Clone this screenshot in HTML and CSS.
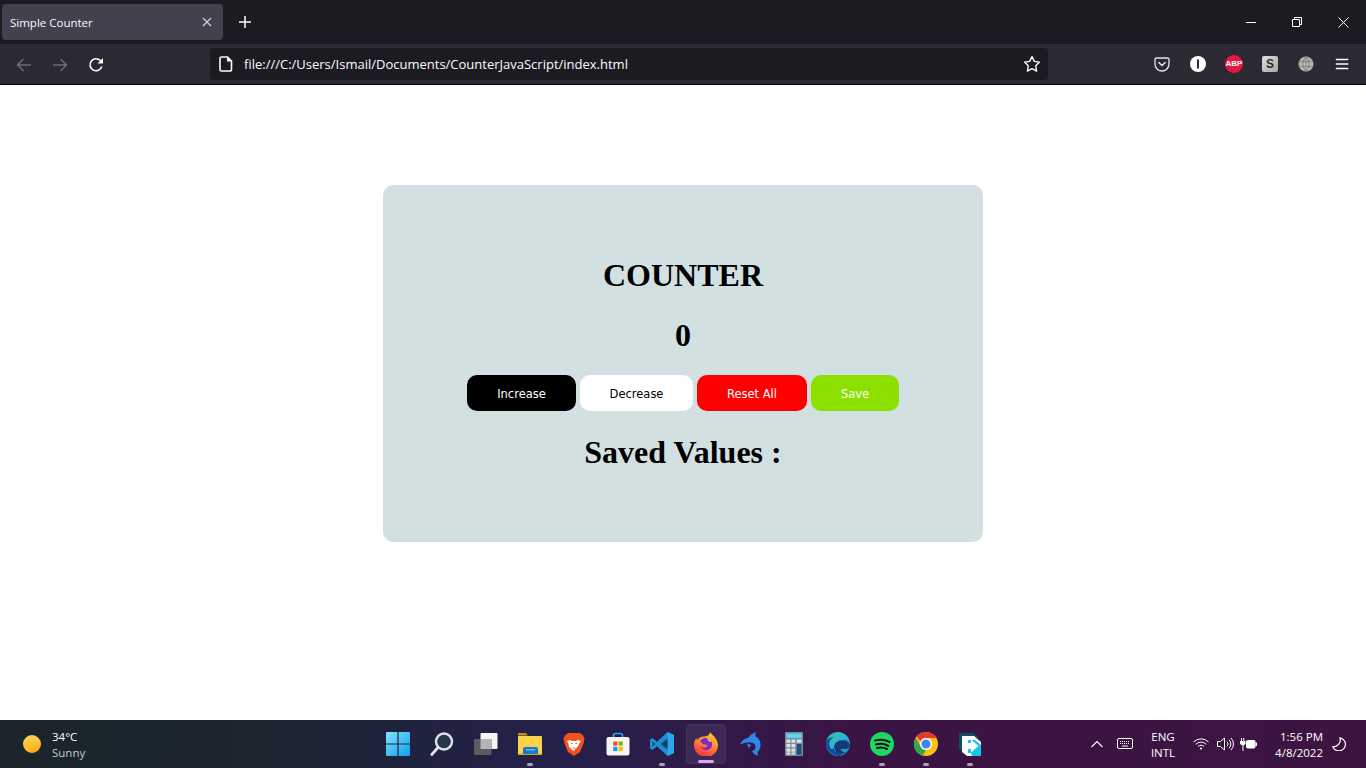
FILE: index.html
```html
<!DOCTYPE html>
<html lang="en">
<head>
<meta charset="utf-8">
<title>Simple Counter</title>
<link rel="stylesheet" href="styles.css">
</head>
<body>
<header class="browser">
  <div class="tabbar">
    <div class="tab">
      <span class="tab-title">Simple Counter</span>
      <svg class="tab-close" width="10" height="10" viewBox="0 0 10 10"><path d="M1 1l8 8M9 1l-8 8" stroke="#d5d5d8" stroke-width="1.1" fill="none"/></svg>
    </div>
    <div class="newtab"><svg width="14" height="14" viewBox="0 0 14 14"><path d="M7 1v12M1 7h12" stroke="#fbfbfe" stroke-width="1.5" fill="none"/></svg></div>
    <div class="winctl">
      <div class="winbtn"><svg width="10" height="10" viewBox="0 0 10 10"><path d="M0 5.5h10" stroke="#fff" fill="none"/></svg></div>
      <div class="winbtn"><svg width="10" height="10" viewBox="0 0 10 10"><path d="M.5 2.5h7v7h-7zM2.5 2.5v-2h7v7h-2" stroke="#fff" fill="none"/></svg></div>
      <div class="winbtn"><svg width="11" height="11" viewBox="0 0 11 11"><path d="M.5.5l10 10M10.500.5l-10 10" stroke="#fff" fill="none"/></svg></div>
    </div>
  </div>
  <div class="toolbar">
    <div class="nav">
      <div class="navbtn"><svg width="16" height="16" viewBox="0 0 16 16"><path d="M15 8H1.500M7.500 2L1.500 8l6 6" stroke="#6f6e75" stroke-width="1.400" fill="none"/></svg></div>
      <div class="navbtn"><svg width="16" height="16" viewBox="0 0 16 16"><path d="M1 8h13.500M8.500 2l6 6-6 6" stroke="#6f6e75" stroke-width="1.400" fill="none"/></svg></div>
      <div class="navbtn"><svg width="16" height="16" viewBox="0 0 16 16"><path d="M13.800 9.500A6 6 0 1 1 12.300 3.500L14.500 5.500" stroke="#fbfbfe" stroke-width="1.600" fill="none"/><path d="M15 1v5.500H9.500z" fill="#fbfbfe"/></svg></div>
    </div>
    <div class="urlbar">
      <svg class="url-file" width="14" height="16" viewBox="0 0 14 16"><path d="M2.500 1h6l4 4v8.500a1.500 1.500 0 0 1-1.500 1.500H2.500A1.500 1.500 0 0 1 1 13.500v-11A1.500 1.500 0 0 1 2.500 1z" fill="none" stroke="#fbfbfe" stroke-width="1.600"/><path d="M8 1v4.500h4.500z" fill="#fbfbfe"/></svg>
      <span class="url-text">file:///C:/Users/Ismail/Documents/CounterJavaScript/index.html</span>
      <svg class="url-star" width="18" height="18" viewBox="0 0 18 18"><path d="M9 1.500l2.300 4.900 5.200.7-3.800 3.700.9 5.400L9 13.700l-4.600 2.500.9-5.400L1.500 7.100l5.200-.7z" fill="none" stroke="#fbfbfe" stroke-width="1.400" stroke-linejoin="round"/></svg>
    </div>
    <div class="extensions">
      <div class="ext"><svg width="16" height="16" viewBox="0 0 16 16"><path d="M2.500 2h11A1.500 1.500 0 0 1 15 3.500V8a7 7 0 0 1-14 0V3.500A1.500 1.500 0 0 1 2.500 2z" fill="none" stroke="#e8e8ea" stroke-width="1.300"/><path d="M4.800 6.500L8 9.500l3.200-3" fill="none" stroke="#e8e8ea" stroke-width="1.500" stroke-linecap="round"/></svg></div>
      <div class="ext"><svg width="16" height="16" viewBox="0 0 16 16"><circle cx="8" cy="8" r="8" fill="#fff"/><rect x="7" y="3.500" width="2" height="9" fill="#2b2a33"/></svg></div>
      <div class="ext"><span class="abp">ABP</span></div>
      <div class="ext"><span class="sbadge">S</span></div>
      <div class="ext"><svg width="16" height="16" viewBox="0 0 16 16"><circle cx="8" cy="8" r="7.500" fill="#b4b4b4"/><path d="M.5 5.500h15M.5 10.500h15M8 .5v15M8 .5C4 4 4 12 8 15.500M8 .5c4 3.500 4 11.500 0 15" fill="none" stroke="#7c7c7e" stroke-width=".8"/></svg></div>
      <div class="ext"><svg width="14" height="12" viewBox="0 0 14 12"><path d="M1 1.500h12.500M1 6h12.500M1 10.500h12.500" stroke="#fbfbfe" stroke-width="1.400" fill="none" transform="translate(-.2 0)"/></svg></div>
    </div>
  </div>
</header>

<main class="page">
  <section class="card">
    <h1 class="title">COUNTER</h1>
    <h1 class="count">0</h1>
    <div class="buttons">
      <button class="btn btn-inc">Increase</button>
      <button class="btn btn-dec">Decrease</button>
      <button class="btn btn-reset">Reset All</button>
      <button class="btn btn-save">Save</button>
    </div>
    <h1 class="saved">Saved Values :</h1>
  </section>
</main>

<footer class="taskbar">
  <div class="weather">
    <span class="sun"></span>
    <div class="weather-text"><span class="temp">34°C</span><span class="cond">Sunny</span></div>
  </div>
  <div class="apps">
    <div class="app"><svg width="24" height="24" viewBox="0 0 24 24"><defs><linearGradient id="w" x1="0" y1="0" x2="1" y2="1"><stop offset="0" stop-color="#7fe3ff"/><stop offset="1" stop-color="#0f9fe8"/></linearGradient></defs><path d="M0 1a1 1 0 0 1 1-1h10.400v11.400H0zM12.600 0H23a1 1 0 0 1 1 1v10.400H12.600zM0 12.600h11.400V24H1a1 1 0 0 1-1-1zM12.600 12.600H24V23a1 1 0 0 1-1 1H12.600z" fill="url(#w)"/></svg></div>
    <div class="app"><svg width="24" height="24" viewBox="0 0 24 24"><circle cx="14" cy="9.500" r="8" fill="#27374a" stroke="#dfe3e8" stroke-width="2.400"/><path d="M8 15.500L1.800 22.500" stroke="#dfe3e8" stroke-width="2.800" stroke-linecap="round"/></svg></div>
    <div class="app"><svg width="24" height="24" viewBox="0 0 24 24"><rect x="6.500" y="1" width="17" height="16" rx="1" fill="#f4f4f4"/><rect x="0" y="7" width="17.500" height="16" rx="1" fill="#5c5c5e"/><rect x="6.500" y="7" width="11" height="10" fill="#b4b4b6"/></svg></div>
    <div class="app"><svg width="24" height="24" viewBox="0 0 24 24"><path d="M0 2a1 1 0 0 1 1-1h7l2 2.500H0z" fill="#c98f10"/><path d="M0 4h23a1 1 0 0 1 1 1v17a1 1 0 0 1-1 1H1a1 1 0 0 1-1-1z" fill="#fbd24c"/><path d="M0 21.500h24V22a1 1 0 0 1-1 1H1a1 1 0 0 1-1-1z" fill="#d9a21b"/><path d="M5 17a2 2 0 0 1 2-2h11a2 2 0 0 1 2 2v5H5z" fill="#1879c9"/><rect x="8" y="17" width="9" height="1.500" fill="#5cb8ef"/></svg><i class="dot"></i></div>
    <div class="app"><svg width="22" height="24" viewBox="0 0 22 24"><path d="M5 1h12l3 2.500 1.500 3-1 5L17 20l-6 4-6-4-3.500-8.500-1-5L2 3.500z" fill="#f4511e"/><path d="M4 9l3-1 2 1h4l2-1 3 1-2 3-1.500 3-2 1.500-1 2H9l-1-2L6 15l-.5-3z" fill="#fff"/><path d="M8 11.500h1.500M12.500 11.500H14M10 16h2" stroke="#f4511e" stroke-width="1.200"/></svg></div>
    <div class="app"><svg width="24" height="24" viewBox="0 0 24 24"><path d="M7.500 7V3.500A2 2 0 0 1 9.500 1.500h5a2 2 0 0 1 2 2V7" fill="none" stroke="#24a8e8" stroke-width="1.700"/><rect x="0.500" y="5" width="23" height="18.500" rx="2" fill="#f5f5f5"/><rect x="7.200" y="9.500" width="4.200" height="4.200" fill="#f25022"/><rect x="12.600" y="9.500" width="4.200" height="4.200" fill="#7fba00"/><rect x="7.200" y="14.800" width="4.200" height="4.200" fill="#00a4ef"/><rect x="12.600" y="14.800" width="4.200" height="4.200" fill="#ffb900"/></svg></div>
    <div class="app"><svg width="24" height="24" viewBox="0 0 24 24"><path d="M17.500 0L24 3v18l-6.500 3L7 14.300 2.500 18 0 16.500V7.500L2.500 6 7 9.700z" fill="#1b8fd6"/><path d="M17.500 0L24 3v18l-6.500 3z" fill="#2aa6ea"/><path d="M17.500 6.800L10.300 12l7.200 5.200z" fill="#0f2a45" fill-opacity=".75"/><path d="M2.500 9.300v5.400L5.400 12z" fill="#0f2a45" fill-opacity=".75"/></svg><i class="dot"></i></div>
    <div class="app app-active"><svg width="24" height="24" viewBox="0 0 24 24"><defs><linearGradient id="f" x1=".7" y1="0" x2=".3" y2="1"><stop offset="0" stop-color="#ffd033"/><stop offset=".45" stop-color="#ff8a30"/><stop offset="1" stop-color="#f0303f"/></linearGradient></defs><path d="M16 0c1 2 3 3 4.500 5C23 8 24 10.500 24 13a12 12 0 0 1-24 0C0 10 1 7.500 2.500 6L3 8.500C4.500 6 7 4.500 10 4.500 12.500 4.500 16 3 16 0z" fill="url(#f)"/><path d="M6 9c2-2.500 5-3.500 8-2.500 3 1 4.500 4 4 7-.5 2.500-3 4.500-6 4.500-2.500 0-4.500-1.500-5-3.500 1.500 1 3 1.500 4.500 1 1.500-.5 2-1.500 2-2.500L9 12c-1-.500-1.500-1.500-3-3z" fill="#7a2bc8"/><path d="M12 6.500c2.500 0 4.500 1 5.500 3l-2 .5c-1-1.500-2-2.500-3.500-3.500z" fill="#ffc63a"/></svg><i class="dot dot-active"></i></div>
    <div class="app"><svg width="21" height="24" viewBox="0 0 21 24"><path d="M0 12C2 8 5 6.500 8 6c2-3 5-5 8-6l-1 4c4 2 6 6 5.500 10-.3 3-2 5-3 6l.5 4-4-2-2-3 2.500-1c1.500-3 1-6-1.500-7-3-1-6-1-8 0-2 .5-3.500 1-5 1z" fill="#2f86e6"/><path d="M7 11l1.500 5 3-2.500z" fill="#2f86e6"/></svg></div>
    <div class="app"><svg width="18" height="24" viewBox="0 0 18 24"><rect width="18" height="24" rx="1" fill="#7d8b96"/><rect x="1.500" y="1.500" width="15" height="4.500" fill="#5bd3f5"/><path d="M1.500 7.500h3.800v3.200H1.500zM6.500 7.500h3.800v3.200H6.500zM11.700 7.500h4.800v3.200h-4.800zM1.500 12h3.800v3.200H1.500zM6.500 12h3.800v3.200H6.500zM1.500 16.500h3.800v3.200H1.500zM6.500 16.500h3.800v3.200H6.500zM1.500 20.400h3.800v2.200H1.500zM6.500 20.400h3.800v2.200H6.500z" fill="#dce3e8"/><rect x="11.700" y="12" width="4.800" height="10.600" fill="#174f88"/></svg></div>
    <div class="app"><svg width="24" height="24" viewBox="0 0 24 24"><defs><linearGradient id="e" x1="0" y1="0" x2="1" y2="1"><stop offset="0" stop-color="#33c6a0"/><stop offset=".5" stop-color="#2fb4d8"/><stop offset="1" stop-color="#1a78c8"/></linearGradient></defs><circle cx="12" cy="12" r="12" fill="url(#e)"/><path d="M24 13.500c0-3-2.500-5.500-6.500-5.500-6 0-9.500 3-9.500 7.500 0 4 3.500 6 7 6 .5 0 1 0 1.500-.2L14 24C6 24 0 18.500 0 12 0 7 4 5 8 5c-5 2-6 8-3 12" fill="#0e4f9c"/><path d="M8.500 15c0-4 4-6.500 8-6 3 .3 6.500 2 7 5 0 2-2 3-4.500 3H15c-.5 0-.5.500 0 1 .5.500 2 2.500 4.500 2.500-4 3-11 1.500-11-5.500z" fill="#16396e"/></svg></div>
    <div class="app"><svg width="24" height="24" viewBox="0 0 24 24"><circle cx="12" cy="12" r="12" fill="#1ed760"/><path d="M5 8.500c5-1.500 10-1 14.500 1.500M6 12.500c4.500-1.200 8.500-.8 12.300 1.300M7 16c3.500-.9 7-.6 10 1" fill="none" stroke="#111" stroke-width="2" stroke-linecap="round"/></svg><i class="dot"></i></div>
    <div class="app"><svg width="24" height="24" viewBox="0 0 24 24"><circle cx="12" cy="12" r="12" fill="#fbc116"/><path d="M12 0a12 12 0 0 1 10.400 6H12a6 6 0 0 0-5.500 3.600L2.600 4.500A12 12 0 0 1 12 0z" fill="#e33b2e"/><path d="M1.700 5.800L7 15a6 6 0 0 0 5 3l-3.300 5.600A12 12 0 0 1 1.700 5.800z" fill="#2fa84f"/><circle cx="12" cy="12" r="6" fill="#fff"/><circle cx="12" cy="12" r="4.600" fill="#4285f4"/></svg><i class="dot"></i></div>
    <div class="app"><svg width="23" height="23" viewBox="0 0 23 23"><path d="M0 0h14l6 5H3v12H0z" fill="#0c4f66"/><path d="M3 3h12l7 6v14H8l-5-4z" fill="#fff"/><path d="M9 7h7l6 5v11h-9l-1-3h-3z" fill="#16c5e8"/><path d="M5 10h7V6.500l7.500 6.500-7.500 6.500V16H5z" fill="#fff"/></svg><i class="dot"></i></div>
  </div>
  <div class="tray">
    <svg class="tray-chev" width="12" height="8" viewBox="0 0 12 8"><path d="M.5 7L6 1.500 11.500 7" stroke="#fff" stroke-width="1.100" fill="none"/></svg>
    <svg class="tray-kbd" width="16" height="12" viewBox="0 0 16 12"><rect x=".5" y=".5" width="15" height="10" rx="1.500" fill="none" stroke="#fff"/><path d="M3 3.500h10M3 5.500h10" stroke="#fff" stroke-dasharray="1 1"/><path d="M5 8h6" stroke="#fff"/></svg>
    <div class="lang"><span>ENG</span><span>INTL</span></div>
    <svg class="tray-wifi" width="16" height="12" viewBox="0 0 16 12"><path d="M.5 4a10.500 10.500 0 0 1 15 0M2.800 6.300a7.300 7.300 0 0 1 10.400 0M5 8.500a4.200 4.200 0 0 1 6 0" fill="none" stroke="#fff"/><circle cx="8" cy="10.500" r="1.100" fill="#fff"/></svg>
    <svg class="tray-vol" width="17" height="14" viewBox="0 0 17 14"><path d="M.5 4.500h3L7.500 1v12l-4-3.500h-3z" fill="none" stroke="#fff"/><path d="M10 4.500a3.500 3.500 0 0 1 0 5M12 2.700a6 6 0 0 1 0 8.600M14 1a8.500 8.500 0 0 1 0 12" fill="none" stroke="#fff"/></svg>
    <svg class="tray-bat" width="17" height="13" viewBox="0 0 17 13"><path d="M1.500 0v3M3.800 0v3" stroke="#fff" fill="none"/><path d="M0 3h5.500v3L3.500 7.500V13h-1V7.500L0 6z" fill="#fff"/><rect x="6.500" y="2.500" width="8.500" height="7.500" rx="1" fill="#fff" stroke="#fff"/><rect x="15.500" y="4.500" width="1.500" height="3.500" fill="#fff"/></svg>
    <div class="clock"><span>1:56 PM</span><span>4/8/2022</span></div>
    <svg class="tray-moon" width="14" height="14" viewBox="0 0 14 14"><path d="M8 .8A6.500 6.500 0 0 1 13 9.500 6.500 6.500 0 0 1 .8 9.800 7 7 0 0 0 8 .8z" fill="none" stroke="#fff" stroke-width="1.200"/></svg>
  </div>
</footer>
</body>
</html>
```
FILE: styles.css
```css
* { box-sizing: border-box; margin: 0; padding: 0; }
html, body { height: 100%; overflow: hidden; }
body { display: flex; flex-direction: column; height: 768px; background: #fff; font-family: "Open Sans", "Noto Sans", sans-serif; }

.browser { flex: none; height: 85px; background: #1c1b22; border-bottom: 1px solid #0c0c0e; }
.tabbar { height: 44px; display: flex; align-items: flex-start; padding: 4px 0 0 2px; background: #1c1b22; }
.tab { width: 221px; height: 36px; background: #42414d; border-radius: 4px; display: flex; align-items: center; justify-content: space-between; padding: 0 11px 0 8px; }
.tab-title { color: #fbfbfe; font-size: 11.500px; }
.newtab { width: 44px; height: 36px; display: flex; align-items: center; justify-content: center; }
.winctl { margin: -4px 0 0 auto; display: flex; height: 44px; }
.winbtn { width: 46px; height: 44px; display: flex; align-items: center; justify-content: center; }

.toolbar { height: 40px; background: #2b2a33; display: flex; align-items: center; padding: 0 6px; }
.nav { display: flex; width: 204px; padding-top: 1px; }
.navbtn { width: 36px; height: 32px; display: flex; align-items: center; justify-content: center; }
.urlbar { width: 838px; height: 32px; background: #1c1b22; border-radius: 4px; display: flex; align-items: center; padding: 0 7px 0 9px; }
.url-text { color: #fbfbfe; font-size: 13px; margin-left: 11px; flex: 1; white-space: nowrap; }
.extensions { display: flex; margin-left: auto; }
.ext { width: 36px; height: 32px; display: flex; align-items: center; justify-content: center; }
.abp { width: 18px; height: 18px; border-radius: 50%; background: #e8173f; color: #fff; font: bold 8px/18px "Liberation Sans", sans-serif; text-align: center; }
.sbadge { width: 16px; height: 16px; border-radius: 2px; background: linear-gradient(135deg, #dedede, #a8a8a8); color: #2b2a33; font: bold 12px/16px "Liberation Sans", sans-serif; text-align: center; }

.page { flex: 1; display: flex; justify-content: center; align-items: flex-start; padding-top: 100px; background: #fff; }
.card { width: 600px; height: 357px; background: #d3e0e1; border-radius: 10px; padding-top: 72px; display: flex; flex-direction: column; align-items: center; }
.title, .count, .saved { font-family: "Liberation Serif", "Times New Roman", serif; font-size: 32px; font-weight: bold; line-height: 37px; color: #000; }
.count { margin-top: 23px; }
.buttons { display: flex; gap: 4px; margin-top: 21px; }
.btn { height: 36px; border: 0; border-radius: 10px; padding-top: 2px; font-family: "DejaVu Sans", sans-serif; font-size: 11.500px; }
.btn-inc { width: 109px; background: #000; color: #fff; }
.btn-dec { width: 113px; background: #fff; color: #000; }
.btn-reset { width: 110px; background: #f00; color: #fff; }
.btn-save { width: 88px; background: #8be000; color: #fff; }
.saved { margin-top: 23px; }

.taskbar { flex: none; height: 48px; display: grid; grid-template-columns: 376px 616px 374px; background: linear-gradient(90deg, #1a2429 0%, #1c2530 20%, #23204a 40%, #3a1445 62%, #3d1440 100%); color: #fff; }
.weather { display: flex; align-items: center; padding-left: 23px; gap: 11px; }
.sun { width: 18px; height: 18px; border-radius: 50%; background: linear-gradient(160deg, #ffdc5a, #f9a40e); }
.weather-text { display: flex; flex-direction: column; font-size: 11.500px; line-height: 16px; padding-top: 2px; }
.cond { color: #c8ccce; }
.apps { display: flex; align-items: center; }
.app { width: 44px; height: 44px; display: flex; align-items: center; justify-content: center; position: relative; border-radius: 4px; }
.app-active { width: 40px; height: 40px; margin: 0 2px; background: rgba(255, 255, 255, 0.07); border: 1px solid rgba(255, 255, 255, 0.04); }
.dot { position: absolute; left: 50%; bottom: 0; width: 6px; height: 3px; margin-left: -3px; border-radius: 2px; background: #a9a3b2; }
.dot-active { width: 16px; margin-left: -8px; bottom: 0; background: #e0a6ea; }

.tray { display: flex; align-items: center; font-size: 11.500px; padding-left: 99px; }
.tray-kbd { margin-left: 14px; }
.lang { width: 38px; margin-left: 11px; padding-top: 2px; display: flex; flex-direction: column; align-items: center; line-height: 16px; }
.tray-wifi { margin-left: 11px; }
.tray-vol { margin-left: 8px; }
.tray-bat { margin-left: 6px; }
.clock { width: 66px; margin-left: 0; padding-top: 2px; display: flex; flex-direction: column; align-items: flex-end; line-height: 16px; }
.tray-moon { margin-left: 9px; }
```
